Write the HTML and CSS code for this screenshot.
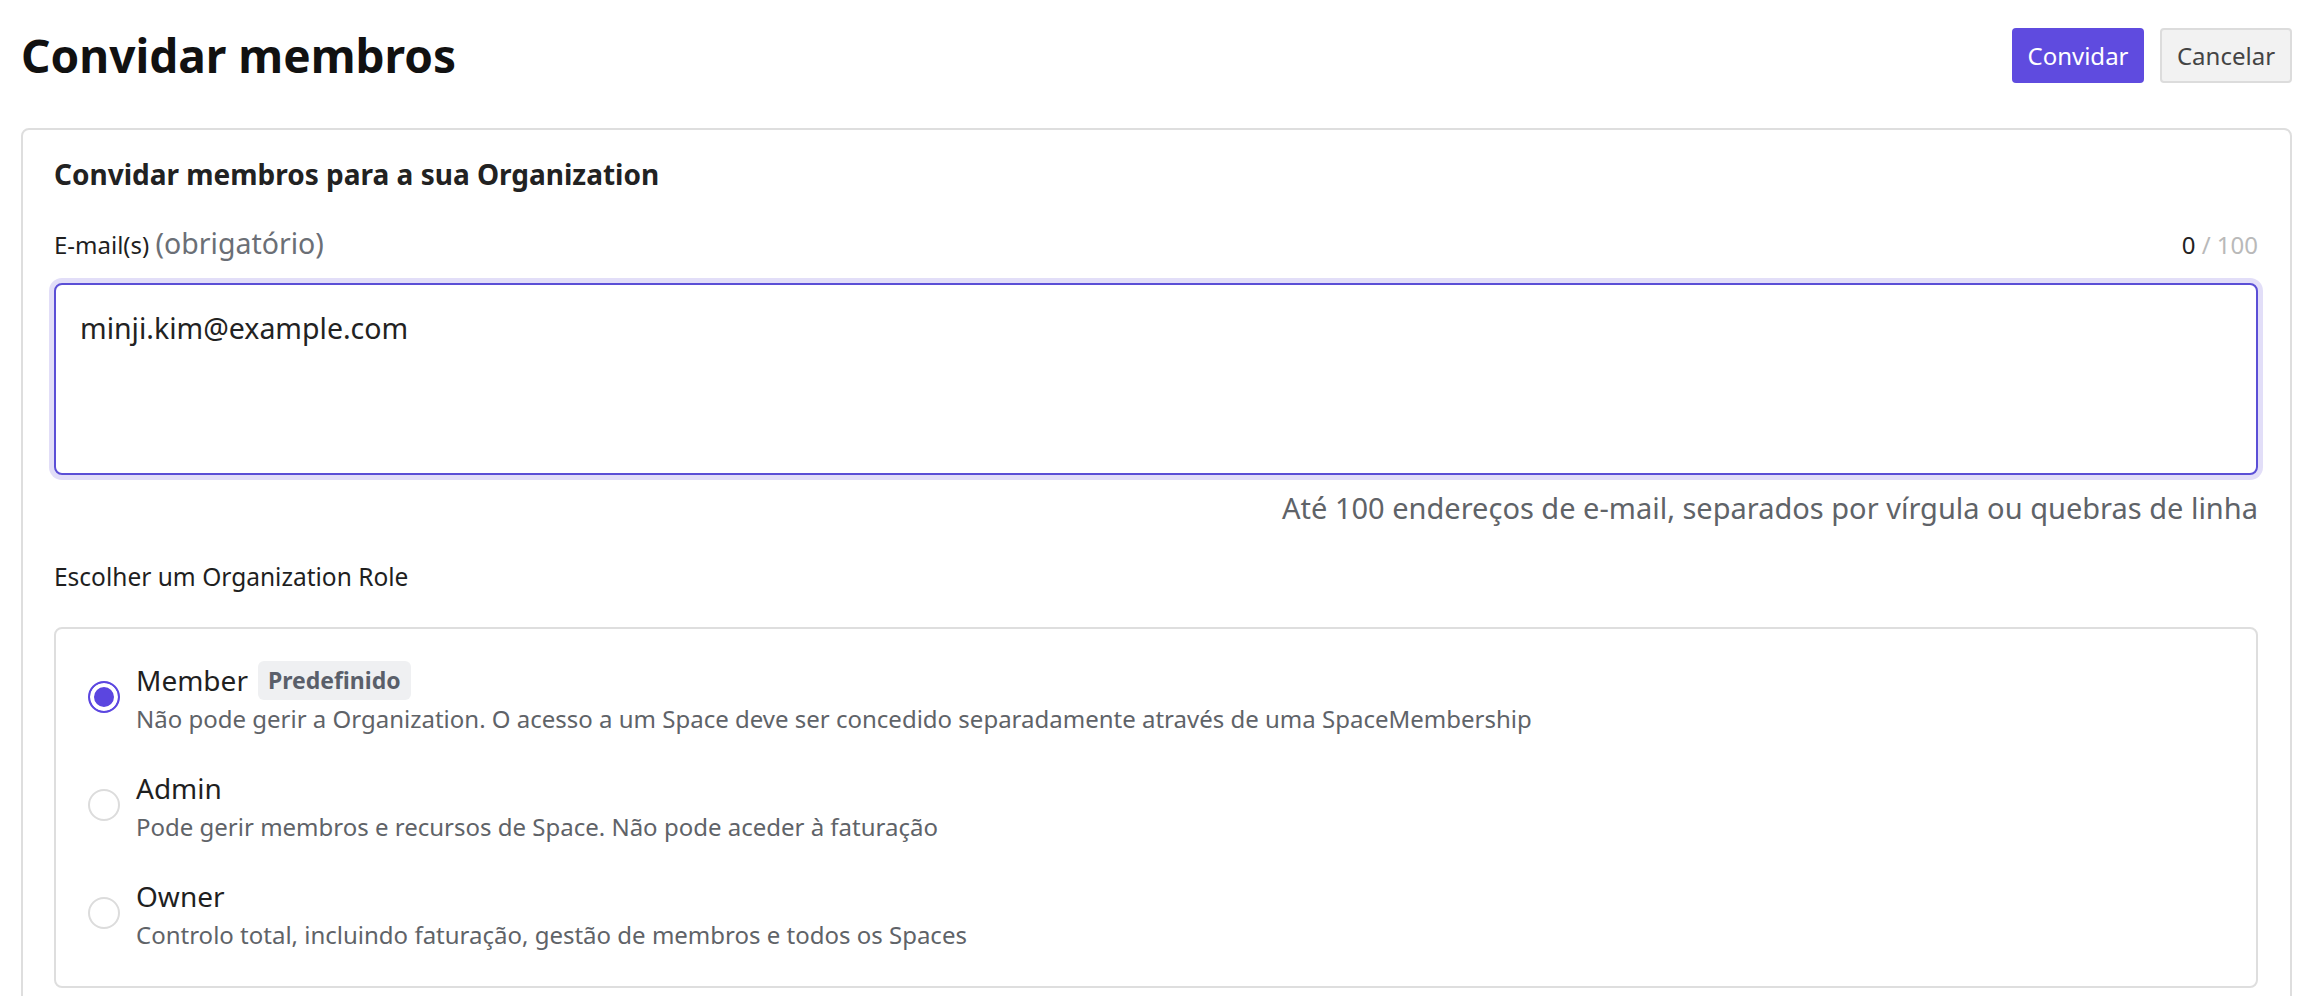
FILE: index.html
```html
<!DOCTYPE html>
<html lang="pt">
<head>
    <meta charset="UTF-8">
    <title>Convidar membros</title>
    <link rel="stylesheet" href="styles.css">
</head>
<body>
<div class="page">
    <header class="page-header">
        <h1>Convidar membros</h1>
        <div class="actions">
            <button class="btn btn-primary">Convidar</button>
            <button class="btn btn-secondary">Cancelar</button>
        </div>
    </header>

    <section class="card">
        <h2>Convidar membros para a sua Organization</h2>

        <div class="field-label">
            <label for="emails">E-mail(s) <span class="required">(obrigatório)</span></label>
            <span class="counter"><b>0</b> / 100</span>
        </div>
        <textarea id="emails" class="email-input">minji.kim@example.com</textarea>
        <p class="hint">Até 100 endereços de e-mail, separados por vírgula ou quebras de linha</p>

        <div class="section-label">Escolher um Organization Role</div>
        <div class="role-list">
            <div class="role">
                <span class="radio checked"></span>
                <div class="role-text">
                    <div class="role-name">Member <span class="badge">Predefinido</span></div>
                    <div class="role-desc">Não pode gerir a Organization. O acesso a um Space deve ser concedido separadamente através de uma SpaceMembership</div>
                </div>
            </div>
            <div class="role">
                <span class="radio"></span>
                <div class="role-text">
                    <div class="role-name">Admin</div>
                    <div class="role-desc">Pode gerir membros e recursos de Space. Não pode aceder à faturação</div>
                </div>
            </div>
            <div class="role">
                <span class="radio"></span>
                <div class="role-text">
                    <div class="role-name">Owner</div>
                    <div class="role-desc">Controlo total, incluindo faturação, gestão de membros e todos os Spaces</div>
                </div>
            </div>
        </div>
    </section>
</div>
</body>
</html>
```

FILE: styles.css
```css
body {
    margin: 0;
    font-family: "Noto Sans", "Open Sans", sans-serif;
    color: #1f1f1f;
    background: #fff;
}
.page {
    padding: 28px 24px 0 21px;
}
.page-header {
    display: flex;
    align-items: center;
    justify-content: space-between;
    height: 55px;
    margin-bottom: 45px;
}
.page-header h1 {
    margin: 0;
    font-size: 46px;
    line-height: 55px;
    font-weight: 700;
    color: #111;
}
.actions {
    display: flex;
    gap: 16px;
}
.btn {
    font-family: inherit;
    font-size: 24px;
    height: 55px;
    width: 132px;
    padding: 0;
    border-radius: 4px;
    cursor: pointer;
}
.btn-primary {
    background: #5f4bdf;
    color: #fff;
    border: none;
}
.btn-secondary {
    background: #f2f2f2;
    color: #444;
    border: 2px solid #dcdcdc;
}
.card {
    border: 2px solid #dedede;
    border-radius: 8px;
    padding: 28px 32px 60px 31px;
}
.card h2 {
    margin: 0 0 35px;
    font-size: 28px;
    line-height: 32px;
    font-weight: 700;
    color: #222;
}
.field-label {
    display: flex;
    justify-content: space-between;
    align-items: baseline;
    line-height: 36px;
    margin-bottom: 20px;
}
.field-label label {
    font-size: 24px;
    color: #1f1f1f;
}
.required {
    font-size: 28.5px;
    color: #6b6f76;
}
.counter {
    font-size: 24px;
    color: #b9b9b9;
}
.counter b {
    font-weight: 400;
    color: #222;
}
.email-input {
    display: block;
    box-sizing: border-box;
    width: 100%;
    height: 192px;
    margin: 0;
    padding: 23px 24px;
    border: 2px solid #5b4fd6;
    border-radius: 8px;
    box-shadow: 0 0 0 5px #e2def8;
    outline: none;
    resize: none;
    font-family: inherit;
    font-size: 28.5px;
    line-height: 40px;
    color: #222;
}
.hint {
    margin: 13px 0 0;
    text-align: right;
    font-size: 29px;
    line-height: 40px;
    color: #5f6368;
}
.section-label {
    margin-top: 33px;
    font-size: 24.5px;
    line-height: 32px;
    color: #1f1f1f;
}
.role-list {
    margin-top: 34px;
    border: 2px solid #dedede;
    border-radius: 8px;
    padding: 30px 32px 35px 32px;
    display: flex;
    flex-direction: column;
    gap: 32px;
}
.role {
    display: flex;
    align-items: center;
    gap: 16px;
}
.radio {
    flex: none;
    box-sizing: border-box;
    width: 32px;
    height: 32px;
    border-radius: 50%;
    border: 2px solid #dcdcdc;
    background: #fff;
}
.radio.checked {
    border-color: #5b46e0;
    background: #5b46e0;
    box-shadow: inset 0 0 0 4px #fff;
}
.role-name {
    display: flex;
    align-items: center;
    gap: 10px;
    font-size: 28px;
    line-height: 42px;
    color: #1f1f1f;
}
.badge {
    font-size: 23px;
    line-height: 39px;
    font-weight: 700;
    color: #5a5f6a;
    background: #eff0f2;
    border-radius: 6px;
    padding: 0 10px;
}
.role-desc {
    margin-top: 1px;
    font-size: 24px;
    line-height: 33px;
    color: #5f6368;
}
```
